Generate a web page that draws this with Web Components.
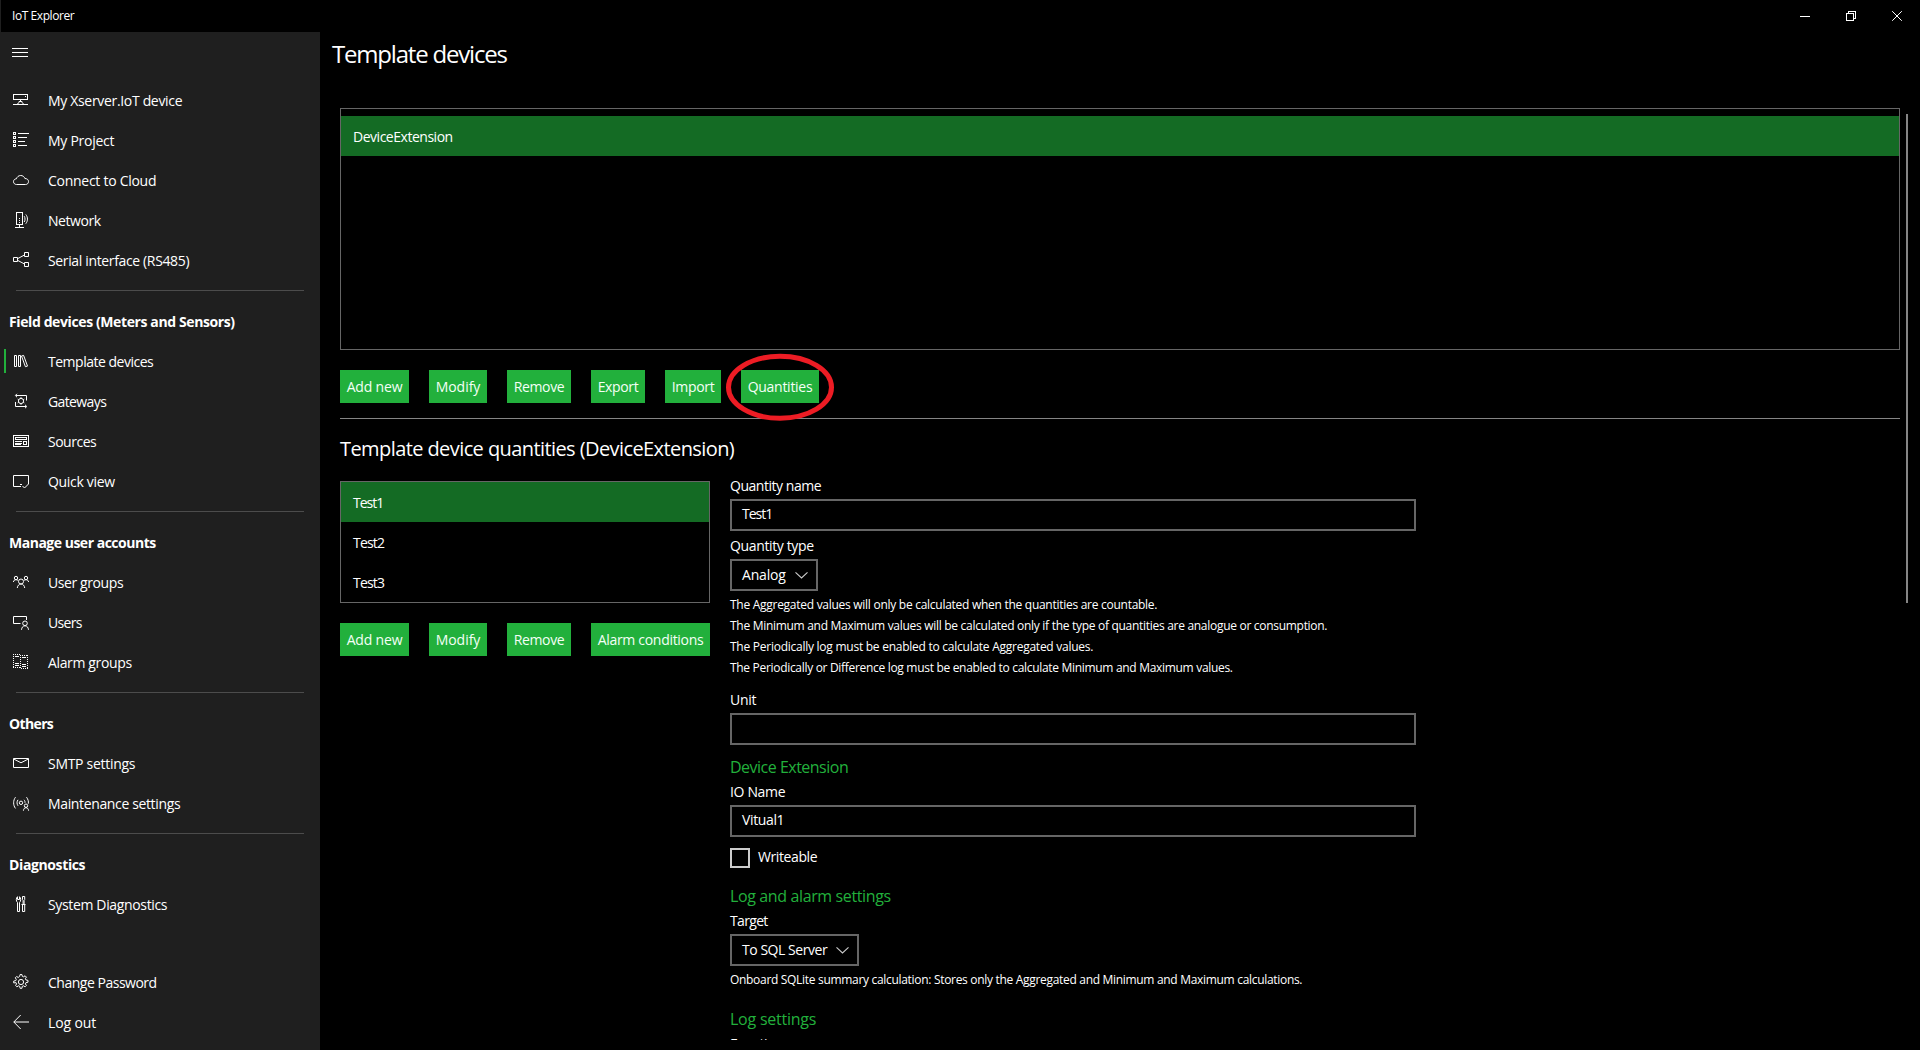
<!DOCTYPE html>
<html lang="en">
<head>
<meta charset="utf-8">
<title>IoT Explorer</title>
<style>
html,body{margin:0;background:#000;overflow:hidden}
body{font:14px "Open Sans","Noto Sans",sans-serif;color:#fff}
</style>
</head>
<body>
<iot-app></iot-app>
<script>
const define = (name, css, html, init) => customElements.define(name, class extends HTMLElement {
  connectedCallback() {
    if (this.shadowRoot) return;
    const root = this.attachShadow({ mode: 'open' });
    root.innerHTML = `<style>*{box-sizing:border-box}:host{box-sizing:border-box}${css}</style>${html}`;
    if (init) init(this, root);
  }
});

const ICONS = {
  device: '<g shape-rendering="crispEdges"><path d="M.5 2.5h14v5H.5zM0 12.5h15M12 4.5h1"/></g><path d="M7.5 8v1.2M6 9.5h3v1.2L10.8 12M6 9.5v1.2L4.2 12"/>',
  project: '<g shape-rendering="crispEdges"><path d="M.5.5h2v2h-2zM.5 4.5h2v2h-2zM.5 8.5h2v2h-2zM.5 12.5h2v2h-2zM5 1.5h11M5 5.5h9M5 9.5h7M5 13.5h9"/></g>',
  cloud: '<path d="M3.6 12.5C1.8 12.5.5 11.3.5 9.7c0-1.7 1.2-2.8 2.9-2.9C4 4.900 5.600 3.500 7.700 3.500c2 0 3.600 1.200 4.200 3 2.100 0 3.600 1.200 3.600 3s-1.200 3-3 3z"/>',
  network: '<g shape-rendering="crispEdges"><path d="M3.500.5h6v12h-6zM6.500 13v2M2 15.500h9M6 6.500h1M6 8.500h1M6 10.500h1"/></g><path d="M11.200 4.200c1.100 1.800 1.100 4 0 5.800M12.800 2.500c2.200 2.800 2.200 6.300 0 9.200"/>',
  share: '<path d="M.5 5.500h4v4h-4zM11.500.5h4v4h-4zM11.500 10.500h4v4h-4zM4.500 6.700l7-3.700M4.500 8.300l7 3.700"/>',
  library: '<path d="M1.500 2.500h2v11h-2zM5.500 2.500h2v11h-2zM8.500 3l2.100-.6 3.900 10.700-2.100.6z"/>',
  gateway: '<path d="M3 2.500h10.500v5M2.500 9v4.500H13M4 .8L2.300 2.500 4 4.200M12 11.800l1.800 1.700-1.800 1.700"/><circle cx="8" cy="8" r="2.600"/><path d="M8 4.200v1.200M8 10.600v1.200M4.700 6.100l1 .6M10.300 9.300l1 .6M4.700 9.900l1-.6M10.300 6.700l1-.6"/>',
  sources: '<g shape-rendering="crispEdges"><path d="M.5 2.500h15v11H.5zM2 4.500h12M2 6.500h12M2.500 5v1M13.500 5v1M2 8.500h7M2 10.500h7M10.500 8.500h3v3h-3zM2 11.500h6"/></g>',
  view: '<path d="M8 13.500H.5v-11h15v8.500M7 11.500h2M9.500 13l2 2 4-4"/>',
  groups: '<circle cx="3" cy="4" r="1.700"/><circle cx="13" cy="4" r="1.700"/><circle cx="8" cy="7.500" r="2.500"/><path d="M.4 8c.2-1.500 1.300-2.300 2.600-2.300 1 0 1.700.4 2.200 1M15.600 8c-.2-1.500-1.300-2.300-2.600-2.300-1 0-1.700.4-2.200 1M4.300 14c.2-2.300 1.700-4 3.700-4s3.500 1.700 3.700 4"/>',
  users: '<path d="M7.500 9.500h-7v-7h13v3.500"/><circle cx="12" cy="9.300" r="2.300"/><path d="M8.500 15.800c.2-2.400 1.500-4 3.500-4s3.300 1.600 3.500 4"/>',
  alarm: '<g shape-rendering="crispEdges"><path stroke-dasharray="1 1" d="M0 .5h7M9 1.500h6M.5 0v14M7.500 1v14M14.500 1v14M0 13.500h7M8 14.500h7M9 .5"/><path d="M2 2.500h4M9 3.500h4M2 9.500h4M2 11.500h4M9 10.500h4M9 12.500h4"/></g>',
  mail: '<path d="M.5 3.500h15v9H.5zM.7 4L8 7.800 15.300 4"/>',
  maintenance: '<circle cx="8" cy="7.800" r="1.700"/><path d="M5 4.800c-1.300 1.700-1.300 4.200 0 6M2.500 2.200c-2.500 3.200-2.500 8 0 11.200M11 4.800c.9 1 1.100 2 1 3M13.500 2.200c1.600 2 2.200 4.300 1.800 6.500"/><circle cx="13" cy="10.700" r="1.700"/><path d="M10.400 15.700c.2-1.900 1.100-3 2.600-3s2.400 1.100 2.600 3"/>',
  tools: '<path d="M4.500 15.500v-9C2.900 5.300 2.900 2 4.500.7v2.800h2V.7c1.600 1.300 1.600 4.600 0 5.800v9zM9.500.5h2.200v3l-.6 1v4M9.500.5v3l.6 1v4M8.500 8.500h4M9.500 8.500v7h2.200v-7"/>',
  gear: '<circle cx="8" cy="8" r="2.600"/><path stroke-linejoin="round" d="M6.700 2.300L7.100.5h1.800l.4 1.800 1.200.5 1.600-1 1.300 1.300-1 1.600.5 1.200 2.100.5v1.800l-2.100.5-.5 1.200 1 1.600-1.300 1.300-1.600-1-1.200.5-.4 2H7.100l-.4-2-1.200-.5-1.600 1-1.300-1.300 1-1.600-.5-1.200L.7 8.900V7.100l2.100-.5.5-1.200-1-1.600 1.300-1.300 1.600 1z"/>',
  back: '<path d="M.8 8H16M7.700 1L.8 8l6.900 7"/>',
  menu: '<g shape-rendering="crispEdges"><path d="M0 4.500h16M0 8.500h16M0 12.500h16"/></g>',
  min: '<g shape-rendering="crispEdges"><path d="M0 8.500h10"/></g>',
  restore: '<g shape-rendering="crispEdges"><path d="M0.500 5.500h7v7h-7zM2.500 5v-1.500h7v7H8"/></g>',
  close: '<path d="M.2 3.200l9.600 9.600M9.800 3.200L.2 12.800"/>',
  chevron: '<path stroke="#ccc" stroke-width="1.100" d="M.5 5.300L6.500 11l6-5.700"/>'
};

define('ui-icon', ':host{display:block;width:16px;height:16px;flex:none}svg{display:block;overflow:visible}', '',
  (el, root) => root.innerHTML += `<svg width="16" height="16" viewBox="0 0 16 16" fill="none" stroke="#fff" stroke-width="1">${ICONS[el.getAttribute('name')]}</svg>`);

/* Text run tracked to a set width: the w attribute gives the run's length in pixels. */
define('ui-text', ':host{display:block;white-space:pre;flex:none}span{display:inline-block}', '<span><slot></slot></span>', (el, root) => {
  const w = +el.getAttribute('w') - 0.8;
  const span = root.querySelector('span');
  if (w > 0) span.style.letterSpacing = ((w - span.getBoundingClientRect().width) / el.textContent.length).toFixed(4) + 'px';
});

define('title-bar', `:host{display:flex;height:32px;align-items:center;justify-content:space-between;padding:0 12px;background:#000;border-left:1px solid #1f1f1f;padding-left:11px}
  ui-text{font-size:12px;line-height:32px}nav{display:flex;gap:30px;padding-right:0}`,
  `<ui-text w="63">IoT Explorer</ui-text><nav><ui-icon name="min"></ui-icon><ui-icon name="restore"></ui-icon><ui-icon name="close"></ui-icon></nav>`);

define('nav-item', `:host{display:flex;height:40px;padding-left:4px;align-items:flex-start}
  i{width:2px;height:24px;margin:7px 7px 0 0}:host([selected]) i{background:#22b03c}
  ui-icon{margin:11px 19px 0 0}ui-text{line-height:40px}`, '',
  (el, root) => root.innerHTML += `<i></i><ui-icon name="${el.getAttribute('icon')}"></ui-icon><ui-text w="${el.getAttribute('w')}">${el.getAttribute('label')}</ui-text>`);

define('nav-section', ':host{display:block;height:40px;padding-left:9px;font-weight:700;line-height:40px}', '',
  (el, root) => root.innerHTML += `<ui-text w="${el.getAttribute('w')}">${el.getAttribute('label')}</ui-text>`);

define('nav-rule', ':host{display:block;height:1px;margin:9px 16px 11px;background:#4c4c4c}', '');

define('side-nav', `:host{display:flex;flex-direction:column;width:320px;flex:none;background:#1f1f1f;padding-bottom:7px}
  .top{height:49px;padding:12px 12px 0}.grow{flex:1}`,
  `<div class="top"><ui-icon name="menu"></ui-icon></div>
  <nav-item icon="device" label="My Xserver.IoT device" w="135"></nav-item>
  <nav-item icon="project" label="My Project" w="67"></nav-item>
  <nav-item icon="cloud" label="Connect to Cloud" w="109"></nav-item>
  <nav-item icon="network" label="Network" w="53.500"></nav-item>
  <nav-item icon="share" label="Serial interface (RS485)" w="142"></nav-item>
  <nav-rule></nav-rule>
  <nav-section label="Field devices (Meters and Sensors)" w="226.500"></nav-section>
  <nav-item selected icon="library" label="Template devices" w="106"></nav-item>
  <nav-item icon="gateway" label="Gateways" w="59"></nav-item>
  <nav-item icon="sources" label="Sources" w="49"></nav-item>
  <nav-item icon="view" label="Quick view" w="67.500"></nav-item>
  <nav-rule></nav-rule>
  <nav-section label="Manage user accounts" w="147.500"></nav-section>
  <nav-item icon="groups" label="User groups" w="76"></nav-item>
  <nav-item icon="users" label="Users" w="34.500"></nav-item>
  <nav-item icon="alarm" label="Alarm groups" w="84.500"></nav-item>
  <nav-rule></nav-rule>
  <nav-section label="Others" w="45"></nav-section>
  <nav-item icon="mail" label="SMTP settings" w="88"></nav-item>
  <nav-item icon="maintenance" label="Maintenance settings" w="133"></nav-item>
  <nav-rule></nav-rule>
  <nav-section label="Diagnostics" w="77"></nav-section>
  <nav-item icon="tools" label="System Diagnostics" w="120"></nav-item>
  <div class="grow"></div>
  <nav-item icon="gear" label="Change Password" w="109.500"></nav-item>
  <nav-item icon="back" label="Log out" w="49"></nav-item>`);

define('ui-button', `:host{display:flex;height:33px;align-items:center;justify-content:center;background:#22b03c;position:relative}
  ui-text{line-height:33px;color:#f4fff6}svg{position:absolute;left:-16px;top:-17px;overflow:visible}`, '',
  (el, root) => {
    const w = +el.getAttribute('w');
    el.style.width = w + 'px';
    root.innerHTML += `<ui-text w="${w - 12.5}">${el.getAttribute('label')}</ui-text>` +
      (el.hasAttribute('ringed') ? '<svg width="110" height="68" fill="none"><ellipse cx="55" cy="34.300" rx="51.500" ry="31" stroke="#ed1c24" stroke-width="5"/></svg>' : '');
  });

define('button-row', ':host{display:flex;gap:20px}', '<slot></slot>');

define('list-row', ':host{display:block;height:40px;line-height:42px;padding-left:12px}:host([selected]){background:#146b24}', '',
  (el, root) => root.innerHTML += `<ui-text w="${el.getAttribute('w')}">${el.getAttribute('label')}</ui-text>`);

define('list-box', ':host{display:block;border:1px solid #666}', '<slot></slot>');

define('form-label', ':host{display:block;line-height:19px;margin-bottom:4px}', '<slot></slot>');
define('form-title', ':host{display:block;font-size:16px;line-height:22px;margin-bottom:4px;color:#22b03c}', '<slot></slot>');
define('form-note', ':host{display:block;font-size:12px;line-height:21px}', '<slot></slot>');
define('text-field', ':host{display:block;height:32px;border:2px solid #666;padding-left:10px;line-height:26px}', '<slot></slot>');
define('select-field', ':host{display:flex;justify-content:space-between;height:32px;border:2px solid #666;padding:0 5px 0 10px;line-height:28px}ui-icon{margin-top:6px}', '<slot></slot><ui-icon name="chevron"></ui-icon>');
define('check-field', ':host{display:flex;gap:8px;height:20px;line-height:18px}i{width:20px;height:20px;border:2px solid #ccc}', '<i></i><slot></slot>');

define('quantity-form', ':host{display:block;width:686px}',
  `<form-label><ui-text w="92">Quantity name</ui-text></form-label>
  <text-field><ui-text w="31">Test1</ui-text></text-field>
  <form-label style="margin-top:5px"><ui-text w="84.500">Quantity type</ui-text></form-label>
  <select-field style="width:88px"><ui-text w="44.500">Analog</ui-text></select-field>
  <form-note style="margin-top:3px"><ui-text w="428">The Aggregated values will only be calculated when the quantities are countable.</ui-text></form-note>
  <form-note><ui-text w="598">The Minimum and Maximum values will be calculated only if the type of quantities are analogue or consumption.</ui-text></form-note>
  <form-note><ui-text w="364">The Periodically log must be enabled to calculate Aggregated values.</ui-text></form-note>
  <form-note><ui-text w="503.500">The Periodically or Difference log must be enabled to calculate Minimum and Maximum values.</ui-text></form-note>
  <form-label style="margin-top:12px"><ui-text w="27">Unit</ui-text></form-label>
  <text-field></text-field>
  <form-title style="margin-top:11px"><ui-text w="119">Device Extension</ui-text></form-title>
  <form-label><ui-text w="56">IO Name</ui-text></form-label>
  <text-field><ui-text w="43">Vitual1</ui-text></text-field>
  <check-field style="margin-top:11px"><ui-text w="60">Writeable</ui-text></check-field>
  <form-title style="margin-top:17px"><ui-text w="161.500">Log and alarm settings</ui-text></form-title>
  <form-label><ui-text w="38.500">Target</ui-text></form-label>
  <select-field style="width:129px"><ui-text w="86">To SQL Server</ui-text></select-field>
  <form-note style="margin-top:3px"><ui-text w="573">Onboard SQLite summary calculation: Stores only the Aggregated and Minimum and Maximum calculations.</ui-text></form-note>
  <form-title style="margin-top:18px"><ui-text w="87">Log settings</ui-text></form-title>
  <form-label><ui-text w="54">Function</ui-text></form-label>`);

define('template-page', `:host{display:flex;flex-direction:column;flex:1;height:1008px;overflow:hidden;margin-bottom:10px}
  .title{font-size:24px;line-height:44px;padding-left:12px;height:76px}
  .body{display:flex;flex:1;min-height:0;padding-left:20px;gap:6px}
  .content{width:1560px;flex:none}
  .bar{width:2px;height:489px;margin-top:6px;background:#858585}
  .devices{height:242px;padding-top:7px;margin-bottom:20px}
  hr{height:1px;border:0;margin:15px 0 0;background:#858585}
  .sub{font-size:20px;line-height:32px;height:57px;padding-top:14px}
  .split{display:flex;gap:20px;align-items:flex-start}
  .left{width:370px;display:flex;flex-direction:column;gap:20px;padding-top:5px}`,
  `<div class="title"><ui-text w="175.500">Template devices</ui-text></div>
  <div class="body"><div class="content">
    <list-box class="devices"><list-row selected label="DeviceExtension" w="100.500"></list-row></list-box>
    <button-row><ui-button label="Add new" w="69"></ui-button><ui-button label="Modify" w="58"></ui-button><ui-button label="Remove" w="64"></ui-button><ui-button label="Export" w="54"></ui-button><ui-button label="Import" w="56"></ui-button><ui-button label="Quantities" w="78" ringed></ui-button></button-row>
    <hr>
    <div class="sub"><ui-text w="395">Template device quantities (DeviceExtension)</ui-text></div>
    <div class="split">
      <div class="left">
        <list-box><list-row selected label="Test1" w="31"></list-row><list-row label="Test2" w="32"></list-row><list-row label="Test3" w="32"></list-row></list-box>
        <button-row><ui-button label="Add new" w="69"></ui-button><ui-button label="Modify" w="58"></ui-button><ui-button label="Remove" w="64"></ui-button><ui-button label="Alarm conditions" w="119"></ui-button></button-row>
      </div>
      <quantity-form></quantity-form>
    </div>
  </div><div class="bar"></div></div>`);

define('iot-app', ':host{display:flex;flex-direction:column;width:1920px;height:1050px;overflow:hidden;background:#000}main{display:flex;flex:1;min-height:0}',
  '<title-bar></title-bar><main><side-nav></side-nav><template-page></template-page></main>');
</script>
</body>
</html>
